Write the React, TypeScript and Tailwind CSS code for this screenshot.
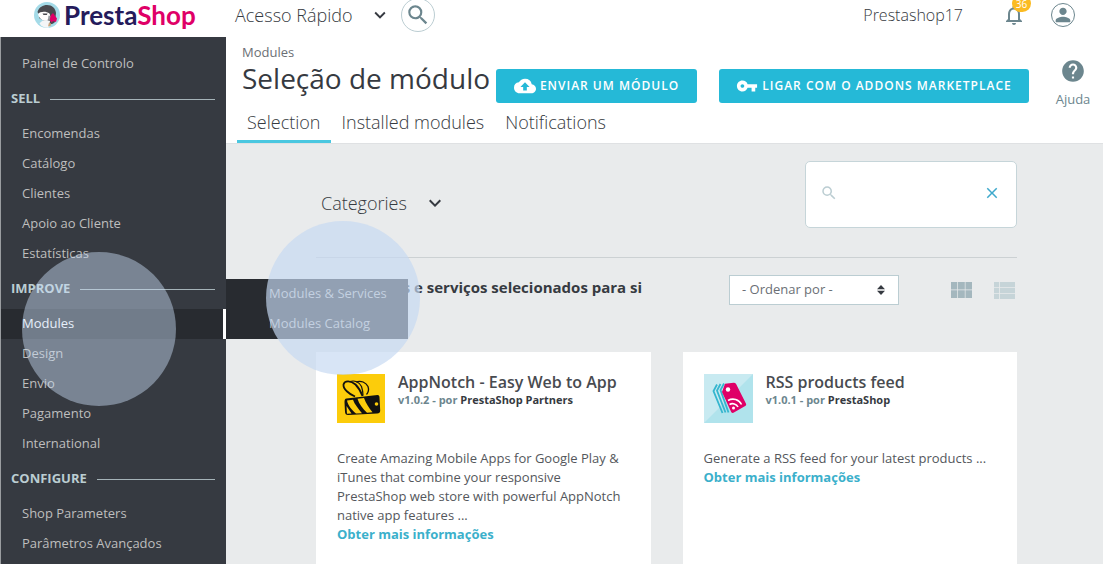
import React from "react";
import {
  MdClose,
  MdCloudUpload,
  MdHelp,
  MdKeyboardArrowDown,
  MdNotificationsNone,
  MdPerson,
  MdSearch,
  MdVpnKey,
} from "react-icons/md";

type Section = { title?: string; items: string[] };

const sections: Section[] = [
  { items: ["Painel de Controlo"] },
  { title: "SELL", items: ["Encomendas", "Catálogo", "Clientes", "Apoio ao Cliente", "Estatísticas"] },
  { title: "IMPROVE", items: ["Modules", "Design", "Envio", "Pagamento", "International"] },
  { title: "CONFIGURE", items: ["Shop Parameters", "Parâmetros Avançados"] },
];

const submenu = ["Modules & Services", "Modules Catalog"];

function PuffinLogo() {
  return (
    <svg viewBox="0 0 26 26" className="size-[26px] shrink-0" aria-hidden="true">
      <circle cx="13" cy="13" r="13" fill="#a4dbe8" />
      <path d="M3.500 10C5 5 9 3 13 3c5 0 8.500 3 9 8l-1 9c-3 3-6 3-9 0L5 16c1-2-.5-4-1.500-6z" fill="#4a4b50" />
      <path d="M4 12c2-2.500 8-3 11.500-.5 1.500 3 0 6-3.500 7-3 1-7-2-8-6.500z" fill="#fff" />
      <path d="M5.500 21.500C7 19 10 18 13 18l3 1-1 6.500c-4 1-7.500-1-9.500-4z" fill="#f4f6f7" />
      <path d="M8.500 11.500h5l-.6 1.500H9.500z" fill="#4a4b50" />
      <path d="M16.500 13.500l2.500-2.500 4 5.500-1 3.500-3-1-1.500 1.500-2-3z" fill="#df0067" />
      <path d="M14.500 13.500l2 .5-1 5-1.500-2z" fill="#9a9da2" />
      <path d="M15 20.500l2 1 0 2-3 1z" fill="#c9a27a" />
    </svg>
  );
}

function BeeIcon() {
  return (
    <svg viewBox="0 0 48 49" className="h-[49px] w-12 shrink-0" aria-hidden="true">
      <rect width="48" height="49" fill="#fccc0b" />
      <g fill="none" stroke="#111">
        <path d="M18 22.500C12 20 6 15 6.500 10.500 7.500 6 14 6.500 18.500 10.500c3.500 3.500 5.500 7.500 7 11.500" strokeWidth="1.800" />
        <path d="M13 7.500c4.500-1.500 9.500.5 11.500 5 1 3 1.500 6 1.500 9" strokeWidth="1.200" />
        <path d="M19 8c5-2 10 .5 12 4.500 1 3 .7 5.500-1.500 8" strokeWidth="1.300" />
      </g>
      <path d="M9.500 24.500l31-3.500c1.500 0 2 1 2 2.500l.7 13c0 2-1 3-3 3L11 41c-2 0-2.800-1-3-3l-.5-10c0-2 .5-3.300 2-3.500z" fill="#111" />
      <path d="M10 26.500l6-.7c1.500 4.500 5.500 9.200 9 13.400l-6 .4c-4-3.500-8-8-9-13.100zM20.500 24.800l6.500-.8c2 5.500 5 10 8.500 14.300l-5.500.5c-4-4-8-8.500-9.500-14z" fill="#fccc0b" />
      <path d="M9.500 32l5 7.500-4.500.2z" fill="#fccc0b" />
      <circle cx="39.500" cy="30" r="1.800" fill="#fccc0b" />
    </svg>
  );
}

function RssTagIcon() {
  return (
    <svg viewBox="0 0 49 49" className="size-[49px] shrink-0" aria-hidden="true">
      <rect width="49" height="49" fill="#b0e3ec" />
      <path d="M0 0h49L0 49z" fill="#c8eaf1" />
      <g fill="none" stroke="#35b6cf" strokeWidth="1.800">
        <path d="M13 10.500l-3.500 6.500 9 22" />
        <path d="M16.500 10l-3.500 6.500 8.500 22" />
        <path d="M20 9.500l-3.500 6.500 8 22.500" />
      </g>
      <path
        d="M21 9.800l8.500-1c1-.1 2 .3 2.600 1.200l9.800 19.500c.5 1 .3 2-.7 2.600l-11.300 6.500c-1 .6-2.200.3-2.700-.7L18 18z"
        fill="#df0067"
      />
      <circle cx="24" cy="15.500" r="2.200" fill="#fff" />
      <circle cx="29.500" cy="34" r="1.500" fill="#fff" />
      <g fill="none" stroke="#fff" strokeWidth="1.600">
        <path d="M25.500 30.500c3-1.800 7-.6 8.500 2.500" />
        <path d="M24 26.500c5-2.800 11-1 13.500 4" />
      </g>
    </svg>
  );
}

function Sidebar() {
  return (
    <nav className="w-[226px] shrink-0 border-l border-[#9a9da0] bg-[#363a41] pt-3 text-[13px] text-[#bebebe]">
      {sections.map((section, index) => (
        <div key={index}>
          {section.title && (
            <h2 className="flex h-10 items-center gap-2.5 pr-[11px] pl-2.5 text-[13px] font-bold text-[#bbcdd2]">
              {section.title}
              <span className="h-px flex-1 bg-[#a5b3b8]" />
            </h2>
          )}
          <ul>
            {section.items.map((item) =>
              item === "Modules" ? (
                <li key={item} className="relative">
                  <a
                    href="#modules"
                    className="flex h-[30px] items-center border-r-[3px] border-white bg-[#282b30] pl-[21px] font-medium text-white"
                  >
                    {item}
                  </a>
                  <ul className="absolute bottom-0 left-full z-10 w-[182px] bg-[#282b30]">
                    {submenu.map((entry) => (
                      <li key={entry}>
                        <a href="#submenu" className="flex h-[30px] items-center pl-[43px] whitespace-nowrap">
                          {entry}
                        </a>
                      </li>
                    ))}
                  </ul>
                </li>
              ) : (
                <li key={item}>
                  <a href="#section" className="flex h-[30px] items-center pl-[21px]">
                    {item}
                  </a>
                </li>
              ),
            )}
          </ul>
        </div>
      ))}
    </nav>
  );
}

type ModuleCardProps = {
  icon: React.ReactNode;
  name: string;
  version: string;
  author: string;
  description: string;
};

function ModuleCard({ icon, name, version, author, description }: ModuleCardProps) {
  return (
    <article className="flex-1 bg-white px-[21px] pt-[22px]">
      <div className="flex gap-[13px]">
        {icon}
        <div>
          <h3 className="text-base leading-4 font-semibold text-[#484b50]">{name}</h3>
          <p className="mt-1 text-[11px] leading-3 font-bold text-[#6c868e]">
            {version} - por <span className="text-[#363a41]">{author}</span>
          </p>
        </div>
      </div>
      <p className="mt-[26px] text-[13px] leading-[19px] text-[#54575c]">{description}</p>
      <a href="#more" className="block text-[13px] leading-[19px] font-bold text-[#3bb0cb]">
        Obter mais informações
      </a>
    </article>
  );
}

export default function App() {
  return (
    <div className="relative flex min-h-screen flex-col overflow-x-hidden bg-white font-['Open_Sans',sans-serif] text-[#363a41]">
      <header className="flex h-[37px] items-center bg-white pb-[7px]">
        <a href="#home" className="flex w-[226px] items-center gap-1 pl-[34px]">
          <PuffinLogo />
          <span className="font-[Lato,sans-serif] text-[26px] leading-7 font-bold text-[#251b5b]">
            Presta<span className="text-[#df0067]">Shop</span>
          </span>
        </a>
        <button type="button" className="ml-[9px] flex items-center gap-4 text-lg font-light">
          Acesso Rápido
          <MdKeyboardArrowDown className="size-[22px] text-[#363a41]" />
        </button>
        <button
          type="button"
          aria-label="Pesquisar"
          className="ml-2.5 flex size-[34px] shrink-0 items-center justify-center rounded-full border border-[#bbcdd2] text-[#6c868e]"
        >
          <MdSearch className="size-[26px]" />
        </button>
        <span className="ml-auto text-base font-light">Prestashop17</span>
        <button type="button" aria-label="Notificações" className="relative ml-[39px] text-[#6c868e]">
          <MdNotificationsNone className="size-6" />
          <span className="absolute -top-2 left-2.5 flex h-[17px] w-[19px] items-center justify-center rounded-full bg-[#fbbb22] text-[10px] leading-none text-white">
            36
          </span>
        </button>
        <button
          type="button"
          aria-label="Perfil"
          className="mr-7 ml-[25px] flex size-6 items-center justify-center overflow-hidden rounded-full border border-[#6c868e] text-[#6c868e]"
        >
          <MdPerson className="size-[22px] shrink-0" />
        </button>
      </header>

      <div className="flex flex-1">
        <Sidebar />
        <div className="flex min-w-0 flex-1 flex-col">
          <div className="flex border-b border-[#dfe1e3] bg-white">
            <div className="flex-1">
              <div className="pt-1.5 pl-4 text-[13px] leading-[18px] text-[#6b6f75]">Modules</div>
              <div className="flex h-[42px] items-end">
                <h1 className="mb-2 pl-4 text-[28px] leading-[34px] whitespace-nowrap">Seleção de módulo</h1>
                <div className="ml-auto flex gap-[22px] text-xs font-semibold tracking-[1px] text-white">
                  <button
                    type="button"
                    className="flex h-[34px] w-[201px] items-center justify-center gap-1 rounded-[3px] bg-[#25b9d7] whitespace-nowrap"
                  >
                    <MdCloudUpload className="size-[22px]" />
                    ENVIAR UM MÓDULO
                  </button>
                  <button
                    type="button"
                    className="flex h-[34px] w-[310px] items-center justify-center gap-1 rounded-[3px] bg-[#25b9d7] whitespace-nowrap"
                  >
                    <MdVpnKey className="size-[22px]" />
                    LIGAR COM O ADDONS MARKETPLACE
                  </button>
                </div>
              </div>
              <nav className="flex gap-px pl-[11px] text-lg font-light">
                <a href="#selection" className="flex h-10 items-center border-b-[3px] border-[#4ac7e0] px-2.5">
                  Selection
                </a>
                <a href="#installed" className="flex h-10 items-center border-b-[3px] border-transparent px-2.5">
                  Installed modules
                </a>
                <a href="#notifications" className="flex h-10 items-center border-b-[3px] border-transparent px-2.5">
                  Notifications
                </a>
              </nav>
            </div>
            <a
              href="#help"
              className="ml-3.5 flex w-[60px] shrink-0 flex-col items-center pt-[21px] text-[13px] text-[#6c868e]"
            >
              <MdHelp className="size-[26px]" />
              <span className="mt-1.5">Ajuda</span>
            </a>
          </div>

          <main className="flex flex-1 flex-col bg-[#e9ebec] pr-[86px] pl-[90px]">
            <div className="flex items-center border-b border-[#ccd1d3] pt-[17px] pb-[29px]">
              <button type="button" className="mt-4 flex items-center gap-4 pl-[5px] text-lg font-light">
                Categories
                <MdKeyboardArrowDown className="size-6 text-[#363a41]" />
              </button>
              <div className="ml-auto flex h-[67px] w-[212px] items-center rounded-[5px] border border-[#c6d5d9] bg-white pr-[15px] pb-1 pl-3.5">
                <MdSearch className="size-[18px] shrink-0 text-[#bbcdd2]" />
                <input
                  type="text"
                  aria-label="Pesquisar módulos"
                  className="min-w-0 flex-1 bg-transparent px-2 text-sm outline-none"
                />
                <button type="button" aria-label="Limpar" className="text-[#3fa9cc]">
                  <MdClose className="size-[18px]" />
                </button>
              </div>
            </div>

            <div className="flex items-start pt-[17px]">
              <h2 className="pl-[30px] text-[15px] leading-6 font-bold">Módulos e serviços selecionados para si</h2>
              <div className="ml-auto flex items-center">
                <div className="relative">
                  <select
                    aria-label="Ordenar por"
                    className="block h-[30px] w-[170px] appearance-none border border-[#bbcdd2] bg-white pl-3 text-[13px] text-[#6b6f75]"
                  >
                    <option>- Ordenar por -</option>
                  </select>
                  <svg
                    viewBox="0 0 8 10"
                    className="pointer-events-none absolute top-2.5 right-3.5 h-2.5 w-2"
                    aria-hidden="true"
                  >
                    <path d="M4 0l4 4.300H0zM4 10L0 5.700h8z" fill="#363a41" />
                  </svg>
                </div>
                <button type="button" aria-label="Grelha" className="ml-[52px] text-[#a4b7be]">
                  <svg viewBox="0 0 21 16" className="h-4 w-[21px]" fill="currentColor">
                    <path d="M0 0h6.300v7.600H0zM7 0h6.800v7.600H7zM14.500 0H21v7.600h-6.500zM0 8.300h6.300V16H0zM7 8.300h6.800V16H7zM14.500 8.300H21V16h-6.500z" />
                  </svg>
                </button>
                <button type="button" aria-label="Lista" className="mr-0.5 ml-[22px] text-[#c6d4d8]">
                  <svg viewBox="0 0 21 17" className="h-[17px] w-[21px]" fill="currentColor">
                    <path d="M0 0h5.200v5.200H0zM6 0h15v5.200H6zM0 6h5.200v5.200H0zM6 6h15v5.200H6zM0 12h5.200v5H0zM6 12h15v5H6z" />
                  </svg>
                </button>
              </div>
            </div>

            <div className="mt-[47px] flex flex-1 gap-8">
              <ModuleCard
                icon={<BeeIcon />}
                name="AppNotch - Easy Web to App"
                version="v1.0.2"
                author="PrestaShop Partners"
                description="Create Amazing Mobile Apps for Google Play & iTunes that combine your responsive PrestaShop web store with powerful AppNotch native app features ..."
              />
              <ModuleCard
                icon={<RssTagIcon />}
                name="RSS products feed"
                version="v1.0.1"
                author="PrestaShop"
                description="Generate a RSS feed for your latest products ..."
              />
            </div>
          </main>
        </div>
      </div>

      <div className="pointer-events-none absolute top-[252px] left-[22px] z-20 size-[154px] rounded-full bg-[#c8dcf5]/46" />
      <div className="pointer-events-none absolute top-[221px] left-[266px] z-20 size-[154px] rounded-full bg-[#c5d8f1]/68" />
    </div>
  );
}
